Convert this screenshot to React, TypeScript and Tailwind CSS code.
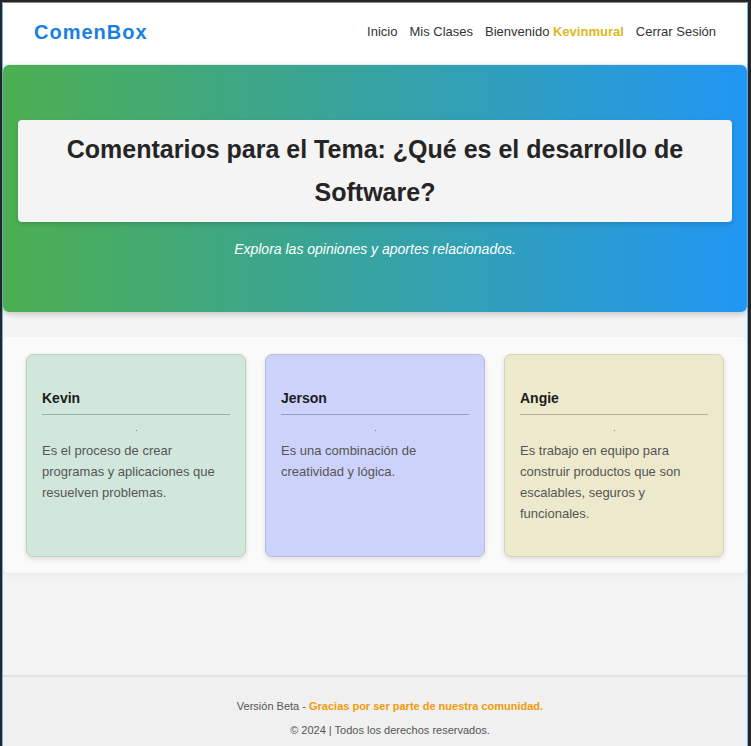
type Comment = {
  author: string;
  text: string;
  tone: string;
};

const comments: Comment[] = [
  {
    author: "Kevin",
    text: "Es el proceso de crear programas y aplicaciones que resuelven problemas.",
    tone: "bg-[#d1e7dc] border-[#b9d2c5]",
  },
  {
    author: "Jerson",
    text: "Es una combinación de creatividad y lógica.",
    tone: "bg-[#cdd2fa] border-[#b7bce0]",
  },
  {
    author: "Angie",
    text: "Es trabajo en equipo para construir productos que son escalables, seguros y funcionales.",
    tone: "bg-[#ede9cd] border-[#d6d3b6]",
  },
];

function Header() {
  return (
    <header className="flex h-[62px] items-center justify-between border-t border-[#8a8a8a] bg-white px-[31px] pb-[3px]">
      <a href="#" className="text-[20px] leading-6 font-bold tracking-[1px] text-[#1a80e0]">
        ComenBox
      </a>
      <nav className="flex gap-3 text-[13px] leading-5 text-[#333]">
        <a href="#">Inicio</a>
        <a href="#">Mis Clases</a>
        <span>
          Bienvenido <strong className="font-bold text-[#d9b91c]">Kevinmural</strong>
        </span>
        <a href="#">Cerrar Sesión</a>
      </nav>
    </header>
  );
}

function Hero() {
  return (
    <section className="mt-px rounded-[6px] bg-linear-to-r/srgb from-[#4caf50] to-[#2196f3] px-[15px] pt-[55px] pb-[52px] text-center shadow-[0_2px_6px_rgba(0,0,0,0.2)]">
      <h1 className="rounded-[4px] bg-[#f4f4f4] px-4 py-2 text-[25px] leading-[43px] font-bold text-[#252525] shadow-[0_2px_4px_rgba(0,0,0,0.15)]">
        Comentarios para el Tema: ¿Qué es el desarrollo de Software?
      </h1>
      <p className="mt-4 text-[14px] leading-[22px] text-white italic">
        Explora las opiniones y aportes relacionados.
      </p>
    </section>
  );
}

function CommentCard({ author, text, tone }: Comment) {
  return (
    <article
      className={`min-h-[203px] rounded-[7px] border px-[15px] pt-[31px] pb-8 shadow-[0_2px_5px_rgba(0,0,0,0.12)] ${tone}`}
    >
      <h2 className="border-b border-black/25 pb-1 text-[14px] leading-6 font-bold text-[#1c1c1c]">
        {author}
      </h2>
      <div className="mx-auto mt-[15px] h-px w-px bg-black/40" />
      <p className="mt-[9px] text-[13px] leading-[21px] text-[#555]">{text}</p>
    </article>
  );
}

function Footer() {
  return (
    <footer className="mt-auto h-[71px] border-t-2 border-[#e2e2e2] bg-[#f0f0f0] pt-[17px] pl-[30px] text-center text-[11px] leading-6 text-[#555]">
      <p>
        Versión Beta -{" "}
        <strong className="font-bold text-[#f09a0a]">Gracias por ser parte de nuestra comunidad.</strong>
      </p>
      <p>© 2024 | Todos los derechos reservados.</p>
    </footer>
  );
}

export default function App() {
  return (
    <div className="min-h-screen bg-[#262626] pt-[2px] pr-[3px] pl-[2px] font-['Liberation_Sans',Arial,sans-serif]">
      <div className="flex min-h-[calc(100vh-2px)] flex-col border-x border-[#6bb8e6] bg-[#f4f4f4]">
        <Header />
        <main>
          <Hero />
          <section className="mt-[25px] grid grid-cols-3 gap-[19px] rounded-[6px] bg-[#fafafa] px-[23px] pt-[17px] pb-4 shadow-[0_2px_6px_rgba(0,0,0,0.06)]">
            {comments.map((comment) => (
              <CommentCard key={comment.author} {...comment} />
            ))}
          </section>
        </main>
        <Footer />
      </div>
    </div>
  );
}
